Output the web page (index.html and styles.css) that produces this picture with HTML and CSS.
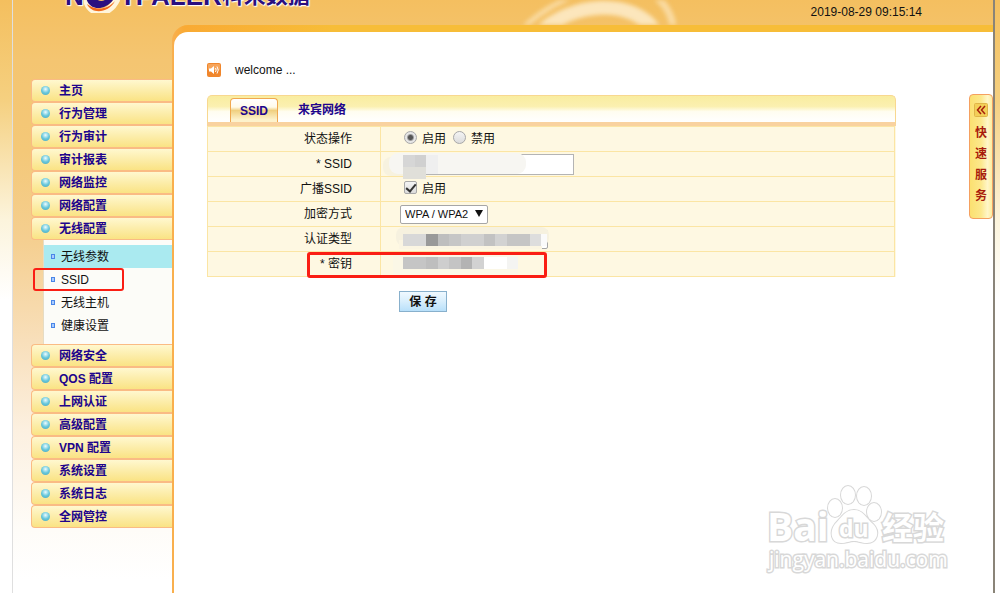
FILE: index.html
```html
<!DOCTYPE html>
<html lang="zh-CN">
<head>
    <meta charset="UTF-8">
    <meta name="viewport" content="width=device-width, initial-scale=1.0">
    <title>无线配置 - SSID</title>
    <link rel="stylesheet" href="styles.css">
</head>
<body>
    <div class="page">
        <header class="header">
            <div class="logo">
                <span>N</span>
                <svg width="36" height="14" viewBox="0 0 36 14">
                    <path d="M2 -4C2 16 24 20 33 0" fill="none" stroke="#fff5dc" stroke-width="7"/>
                    <path d="M2 -4C2 12 22 14 31 -2L24 -2C20 4 12 3 10 -4Z" fill="#2a0f80"/>
                    <path d="M3 5C7 15 24 15 31 2C23 11 12 12 3 5Z" fill="#f26a1b"/>
                </svg>
                <span>TPALER</span>
                <span class="logo-cn">科来数据</span>
            </div>
            <svg class="swirl" width="180" height="25" viewBox="0 0 180 25">
                <g fill="none" stroke="#fdeccb">
                    <path d="M6 32C28 10 46 2 66 -6" stroke-width="5" opacity=".6"/>
                    <path d="M26 34C56 2 122 -4 144 34" stroke-width="14" opacity=".85"/>
                    <path d="M134 -10C152 2 160 14 161 34" stroke-width="7" opacity=".6"/>
                </g>
            </svg>
            <time class="clock">2019-08-29 09:15:14</time>
        </header>

        <div class="body">
            <nav class="sidebar">
                <ul class="menu">
                    <li><a href="#">主页</a></li>
                    <li><a href="#">行为管理</a></li>
                    <li><a href="#">行为审计</a></li>
                    <li><a href="#">审计报表</a></li>
                    <li><a href="#">网络监控</a></li>
                    <li><a href="#">网络配置</a></li>
                    <li>
                        <a href="#">无线配置</a>
                        <ul class="submenu">
                            <li><a class="active" href="#">无线参数</a></li>
                            <li class="marked"><a href="#">SSID</a></li>
                            <li><a href="#">无线主机</a></li>
                            <li><a href="#">健康设置</a></li>
                        </ul>
                    </li>
                    <li><a href="#">网络安全</a></li>
                    <li><a href="#">QOS 配置</a></li>
                    <li><a href="#">上网认证</a></li>
                    <li><a href="#">高级配置</a></li>
                    <li><a href="#">VPN 配置</a></li>
                    <li><a href="#">系统设置</a></li>
                    <li><a href="#">系统日志</a></li>
                    <li><a href="#">全网管控</a></li>
                </ul>
            </nav>

            <div class="frame">
                <main class="content">
                    <div class="notice">
                        <svg width="14" height="14" viewBox="0 0 14 14">
                            <rect width="14" height="14" rx="2" fill="#f0862c"/>
                            <rect x="1" y="1" width="12" height="6" rx="1" fill="#f6a45a"/>
                            <path d="M2 5.5H4L7 3V11L4 8.500H2Z" fill="#fff"/>
                            <path d="M8.500 5Q9.800 7 8.500 9M10 3.500Q12.500 7 10 10.500" fill="none" stroke="#fff"/>
                        </svg>
                        <span>welcome ...</span>
                    </div>

                    <form class="panel">
                        <div class="tabs">
                            <a class="tab current" href="#">SSID</a>
                            <a class="tab" href="#">来宾网络</a>
                        </div>
                        <table class="settings">
                            <tr>
                                <th scope="row">状态操作</th>
                                <td>
                                    <div class="options">
                                        <input type="radio" name="state" id="state-on" checked>
                                        <label for="state-on">启用</label>
                                        <input type="radio" name="state" id="state-off">
                                        <label for="state-off">禁用</label>
                                    </div>
                                </td>
                            </tr>
                            <tr>
                                <th scope="row"><label for="ssid">* SSID</label></th>
                                <td>
                                    <div class="field">
                                        <input class="text" type="text" id="ssid">
                                        <svg class="mask" width="150" height="30" viewBox="0 0 150 30">
                                            <rect x="2" y="8" width="30" height="19" rx="8" fill="#f7f2df"/>
                                            <rect x="8" y="4" width="137" height="21" rx="9" fill="#f7f6f2"/>
                                            <rect x="22" y="6" width="23" height="12" fill="#d6d6d6"/>
                                            <rect x="22" y="18" width="23" height="12" fill="#e0dfd9"/>
                                            <rect x="45" y="6" width="12" height="19" fill="#efefef"/>
                                            <rect x="34" y="6" width="11" height="12" fill="#d0d0d0"/>
                                        </svg>
                                    </div>
                                </td>
                            </tr>
                            <tr>
                                <th scope="row">广播SSID</th>
                                <td>
                                    <div class="options">
                                        <input type="checkbox" id="broadcast" checked>
                                        <label for="broadcast">启用</label>
                                    </div>
                                </td>
                            </tr>
                            <tr>
                                <th scope="row"><label for="cipher">加密方式</label></th>
                                <td>
                                    <div class="field dropdown">
                                        <select id="cipher" class="cipher">
                                            <option>WPA / WPA2</option>
                                        </select>
                                    </div>
                                </td>
                            </tr>
                            <tr>
                                <th scope="row"><label for="auth">认证类型</label></th>
                                <td>
                                    <div class="field">
                                        <select id="auth" class="auth"></select>
                                        <svg class="mask" width="172" height="30" viewBox="0 0 172 30">
                                            <rect x="15" y="3" width="153" height="19" rx="8" fill="#f6f1df"/>
                                            <rect x="18" y="16" width="143" height="9" fill="#fbf5e2"/>
                                            <g shape-rendering="crispEdges">
                                                <rect x="22" y="10" width="23" height="12" fill="#d8d8d8"/>
                                                <rect x="45" y="10" width="12" height="12" fill="#999"/>
                                                <rect x="57" y="10" width="11" height="12" fill="#bebebe"/>
                                                <rect x="68" y="10" width="12" height="12" fill="#c6c6c6"/>
                                                <rect x="80" y="10" width="23" height="12" fill="#d0d0d0"/>
                                                <rect x="103" y="10" width="11" height="12" fill="#c2c2c2"/>
                                                <rect x="114" y="10" width="12" height="12" fill="#d2d2d2"/>
                                                <rect x="126" y="10" width="23" height="12" fill="#c5c5c5"/>
                                                <rect x="149" y="10" width="11" height="12" fill="#ddd"/>
                                                <rect x="160" y="10" width="6" height="12" fill="#fafafa"/>
                                            </g>
                                        </svg>
                                    </div>
                                </td>
                            </tr>
                            <tr class="marked">
                                <th scope="row"><label for="key">* 密钥</label></th>
                                <td>
                                    <div class="field">
                                        <input class="text key" type="text" id="key">
                                        <svg class="mask" width="172" height="30" viewBox="0 0 172 30">
                                            <rect x="12" y="5" width="125" height="21" fill="#fbf7e6"/>
                                            <g shape-rendering="crispEdges">
                                                <rect x="22" y="8" width="23" height="12" fill="#c5c5c5"/>
                                                <rect x="45" y="8" width="12" height="12" fill="#bebebe"/>
                                                <rect x="57" y="8" width="11" height="12" fill="#cecece"/>
                                                <rect x="68" y="8" width="12" height="12" fill="#c4c4c4"/>
                                                <rect x="80" y="8" width="11" height="12" fill="#b3b3b3"/>
                                                <rect x="91" y="8" width="12" height="12" fill="#d2d2d2"/>
                                                <rect x="103" y="8" width="23" height="12" fill="#fff"/>
                                                <rect x="126" y="8" width="11" height="12" fill="#f4f4f2"/>
                                            </g>
                                        </svg>
                                    </div>
                                </td>
                            </tr>
                        </table>
                        <button class="save" type="button">保 存</button>
                    </form>
                </main>

                <button class="quick" type="button">
                    <svg width="14" height="14" viewBox="0 0 14 14">
                        <rect x=".5" y=".5" width="13" height="13" rx="1" fill="#f3cf58" stroke="#e0b548"/>
                        <path d="M7 3L3.500 7L7 11M11 3L7.500 7L11 11" fill="none" stroke="#a8200c" stroke-width="1.500"/>
                    </svg>
                    <span>快</span>
                    <span>速</span>
                    <span>服</span>
                    <span>务</span>
                </button>

                <svg class="watermark" width="190" height="100" viewBox="0 0 190 100">
                    <g fill="#fff" stroke="#d8d8d8" stroke-width="3" paint-order="stroke">
                        <text class="wm-big" x="3" y="59">Bai</text>
                        <g stroke-width="2">
                            <ellipse cx="71" cy="26" rx="7" ry="9"/>
                            <ellipse cx="84" cy="13" rx="7" ry="9"/>
                            <ellipse cx="100" cy="14" rx="7" ry="9"/>
                            <ellipse cx="110" cy="30" rx="7" ry="9"/>
                            <path d="M90 28C99 28 102 36 109 42C117 50 113 61 103 61C97 61 95 59 90 59C85 59 83 61 77 61C67 61 65 50 71 42C77 36 81 28 90 28Z"/>
                        </g>
                        <text class="wm-du" x="75" y="55">du</text>
                        <text class="wm-cn" x="118" y="57">经验</text>
                        <text class="wm-url" x="5" y="85">jingyan.baidu.com</text>
                    </g>
                </svg>
            </div>
        </div>
    </div>
</body>
</html>
```
FILE: styles.css
```css
*,
*::before,
*::after {
    box-sizing: border-box;
}

body {
    margin: 0;
    padding: 0 5px 0 12px;
    font-family: "Liberation Sans", "Noto Sans CJK SC", sans-serif;
    font-size: 12px;
    line-height: 16px;
    color: #111;
    background: #fff linear-gradient(#f4bf5e, #f5d080 100px, #fcf4dc 220px, #fff 300px) no-repeat;
}

a {
    color: inherit;
    text-decoration: none;
}

ul {
    margin: 0;
    padding: 0;
    list-style: none;
}

.page {
    display: flex;
    flex-direction: column;
    min-height: 100vh;
    border-left: 1px solid rgba(150, 150, 150, 0.3);
    border-right: 2px solid #8a8478;
    background: #fff linear-gradient(#f4bf60, #f4c571 60px, #f4c878 150px, #f5cf90 240px, #f8dfba 340px, #fcf0e0 430px, #fefcf8 530px, #fff 580px) no-repeat;
}

/* Header */
.header {
    display: flex;
    position: relative;
    justify-content: space-between;
    height: 25px;
    overflow: hidden;
}

.logo {
    display: flex;
    align-items: flex-end;
    height: 13px;
    padding-left: 52px;
    font-size: 26px;
    font-weight: bold;
    line-height: 34px;
    color: #2a0f80;
    text-shadow: 0 0 2px #fff, 0 0 2px #fff, 1px 1px 1px #fff;
}

.logo-cn {
    font-size: 22px;
}

.swirl {
    position: absolute;
    left: 500px;
    top: 0;
    filter: blur(2px);
}

.clock {
    padding: 4px 71px 0 0;
}

/* Sidebar */
.body {
    display: flex;
    flex: 1;
}

.sidebar {
    flex: none;
    width: 159px;
    padding: 54px 0 64px 18px;
}

.menu > li > a {
    display: flex;
    align-items: center;
    height: 23px;
    border: 1px solid #fabb84;
    border-right: 0;
    border-radius: 4px 0 0 4px;
    padding-left: 9px;
    font-weight: bold;
    color: #20048c;
    background: linear-gradient(#fff8cf, #fcedaa 50%, #fae384);
}

.menu > li > a::before {
    content: "";
    width: 9px;
    height: 9px;
    margin-right: 9px;
    border-radius: 50%;
    background: radial-gradient(circle at 50% 35%, #eefcff, #68c8dc 50%, #48a4bc);
}

.submenu {
    margin-left: 12px;
    padding: 5px 0 7px;
    background: #fcfcf8;
    border-left: 1px solid #e6dcc4;
}

.submenu li {
    position: relative;
}

.submenu a {
    display: flex;
    align-items: center;
    height: 23px;
    padding-left: 7px;
}

.submenu a::before {
    content: "";
    width: 4px;
    height: 5px;
    margin-right: 6px;
    border: 1px solid #4a86e8;
    background: #a8ccff;
}

.submenu .active {
    background: #aaeaf0;
}

.submenu .marked::after {
    content: "";
    position: absolute;
    top: 0;
    left: -11px;
    width: 91px;
    height: 23px;
    border: 2px solid #fa1e14;
    border-radius: 3px;
}

/* Content frame */
.frame {
    position: relative;
    display: flex;
    flex: 1;
    padding: 7px 0 0 2px;
    border-radius: 16px 0 0 0;
    background: linear-gradient(to right, #f9b050, #f9aa34 12px, #f7bd38 160px);
}

.content {
    flex: 1;
    padding: 30px 97px 40px 33px;
    border-radius: 14px 0 0 0;
    background: #fff;
}

.notice {
    display: flex;
    align-items: center;
    gap: 14px;
    height: 16px;
    margin-bottom: 17px;
}

.tabs {
    display: flex;
    align-items: flex-end;
    height: 31px;
    padding: 0 22px;
    border: 1px solid #f8d890;
    border-bottom: 4px solid #f9d2a0;
    border-radius: 5px 5px 0 0;
    background: linear-gradient(#f9eda0, #fbf0b0 40%, #fffdf0 60%, #fff);
}

.tab {
    height: 24px;
    padding: 0 20px;
    font-weight: bold;
    line-height: 24px;
    color: #20048c;
}

.tab.current {
    padding: 0 9px;
    border: 1px solid #f0a850;
    border-bottom: 0;
    border-radius: 4px 4px 0 0;
    background: linear-gradient(#fff, #fffbea 35%, #f0d080 50%, #fdf2cc 90%);
}

.settings {
    width: 100%;
    border-collapse: collapse;
    background: #fef8e2;
}

.settings th,
.settings td {
    height: 25px;
    padding: 0;
    border: 1px solid #fbe5a4;
}

.settings tr {
    position: relative;
}

.settings th {
    width: 173px;
    padding-right: 28px;
    font-weight: normal;
    text-align: right;
}

.settings td {
    padding-left: 19px;
}

.settings .marked::after {
    content: "";
    position: absolute;
    left: 99px;
    top: 0;
    width: 240px;
    height: 26px;
    border: 3px solid #fa1e14;
    border-radius: 3px;
}

.options {
    display: flex;
    align-items: center;
    height: 24px;
    padding-left: 4px;
}

.options input {
    appearance: none;
    width: 13px;
    height: 13px;
    margin: 0 5px 3px 0;
    border: 1px solid #a8a8a8;
    background: linear-gradient(#f4f4f4, #dcdcdc);
}

.options label {
    margin-right: 7px;
}

.options input[type="radio"] {
    border-radius: 50%;
}

.options input[type="radio"]:checked {
    background: radial-gradient(circle, #555 2px, #e6e6e6 4px);
}

.options input[type="checkbox"] {
    border-radius: 2px;
}

.options input[type="checkbox"]:checked::before {
    content: "";
    display: block;
    width: 6px;
    height: 10px;
    margin-left: 3px;
    border: solid #333;
    border-width: 0 2px 2px 0;
    transform: rotate(40deg);
}

.field {
    position: relative;
    display: flex;
    align-items: center;
    height: 24px;
}

.text {
    width: 174px;
    height: 21px;
    border: 1px solid #b4b4b4;
    background: #fff;
}

.key {
    width: 117px;
    height: 19px;
}

select {
    appearance: none;
    height: 19px;
    border: 1px solid #a6a6a6;
    border-radius: 2px;
    padding: 0 4px;
    font-family: inherit;
    font-size: 11px;
    color: #111;
    background: #fff;
}

.cipher {
    width: 88px;
}

.dropdown::after {
    content: "";
    position: absolute;
    left: 75px;
    top: 8px;
    border: solid transparent;
    border-width: 7px 4px 0;
    border-top-color: #111;
    pointer-events: none;
}

.auth {
    width: 148px;
}

.mask {
    position: absolute;
    left: -19px;
    top: -3px;
}

.save {
    display: block;
    width: 48px;
    height: 21px;
    margin: 14px 0 0 192px;
    padding: 0;
    border: 1px solid #88b0cc;
    font: inherit;
    font-weight: bold;
    color: #111;
    background: linear-gradient(#f0f9ff, #d8eefc 50%, #b8e0fa);
}

/* Quick service handle */
.quick {
    position: absolute;
    top: 69px;
    right: 0;
    display: flex;
    flex-direction: column;
    align-items: center;
    width: 24px;
    height: 125px;
    padding: 8px 0 0;
    border: 1px solid #f5a060;
    border-radius: 4px;
    font: inherit;
    font-weight: bold;
    line-height: 21px;
    color: #a81c0c;
    background: linear-gradient(to right, #fbe070, #fce88c 50%, #fff6c8 80%, #fdeea0);
}

.quick svg {
    margin-bottom: 6px;
}

/* Watermark */
.watermark {
    position: absolute;
    right: 39px;
    bottom: 11px;
}

.wm-big {
    font: bold 39px "Open Sans", sans-serif;
}

.wm-du {
    font: bold 23px "Open Sans", sans-serif;
}

.wm-cn {
    font: bold 31px "Noto Sans CJK SC", sans-serif;
}

.wm-url {
    font: 21px "Open Sans", sans-serif;
}
```
